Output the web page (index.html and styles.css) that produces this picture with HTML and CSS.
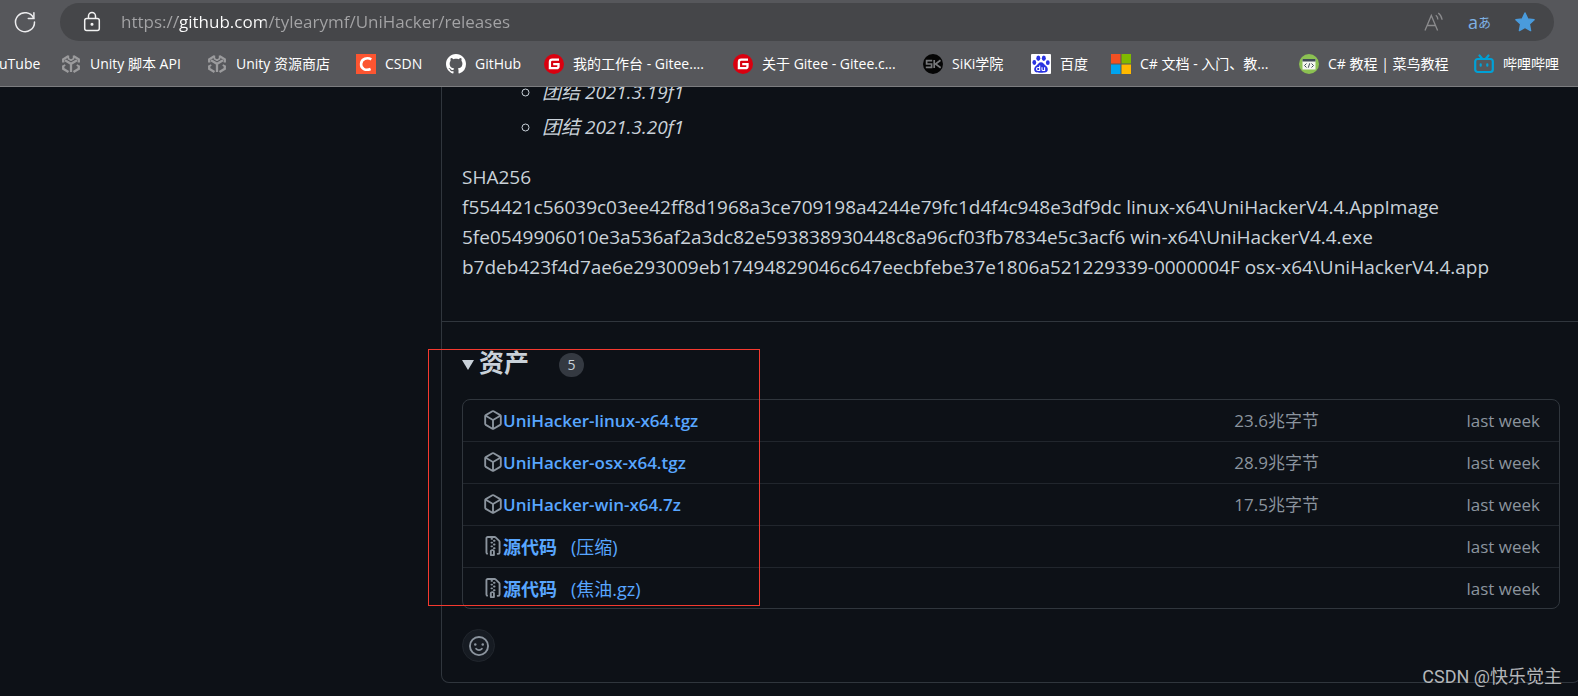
FILE: index.html
```html
<!DOCTYPE html>
<html lang="zh-CN">
<head>
<meta charset="utf-8">
<title>Releases · tylearymf/UniHacker</title>
<link rel="stylesheet" href="styles.css">
</head>
<body>
<svg class="defs" aria-hidden="true">
  <symbol id="i-unity" viewBox="0 0 20 20"><g fill="none" stroke="#9b9b9d" stroke-width="2.300"><path d="M2.200 8.500V5.300L7.200 2.200M12.800 2.200l5 3.100v3.200M2.200 11.800v3L7.500 18M17.800 11.800v3L12.500 18"/><path d="M4 6.300l6 3.500 6-3.500M10 9.800V18"/><path d="M7.400 1.500v3.300L10 6.300l2.600-1.500V1.500M1.500 12.500l2.800-1.500M18.500 12.500 15.700 11" stroke-width="1.600"/></g></symbol>
  <symbol id="i-gitee" viewBox="0 0 20 20"><circle cx="10" cy="10" r="10" fill="#d9000f"/><path d="M15 5.700H8.200a2.300 2.300 0 0 0-2.300 2.300v6.200h6.600a2 2 0 0 0 2-2v-2.100H9.200" fill="none" stroke="#fff" stroke-width="2.300"/></symbol>
  <symbol id="i-package" viewBox="0 0 16 16"><path fill="currentColor" d="m8.878.392 5.25 3.045c.54.314.872.89.872 1.514v6.098a1.75 1.75 0 0 1-.872 1.514l-5.25 3.045a1.75 1.75 0 0 1-1.756 0l-5.25-3.045A1.75 1.75 0 0 1 1 11.049V4.951c0-.624.332-1.201.872-1.514L7.122.392a1.75 1.75 0 0 1 1.756 0ZM7.875 1.69l-4.63 2.685L8 7.133l4.755-2.758-4.63-2.685a.248.248 0 0 0-.25 0ZM2.5 5.677v5.372c0 .09.047.171.125.216l4.625 2.683V8.432Zm6.25 8.271 4.625-2.683a.25.25 0 0 0 .125-.216V5.677L8.75 8.432Z"/></symbol>
  <symbol id="i-zip" viewBox="0 0 16 16"><path fill="currentColor" d="M3.500 1.750v11.500c0 .09.048.173.126.217a.75.75 0 0 1-.752 1.298A1.748 1.748 0 0 1 2 13.250V1.750C2 .784 2.784 0 3.750 0h5.586c.464 0 .909.185 1.237.513l2.914 2.914c.329.328.513.773.513 1.237v8.586A1.750 1.750 0 0 1 12.250 15h-.5a.75.75 0 0 1 0-1.500h.5a.25.25 0 0 0 .25-.25V4.664a.25.25 0 0 0-.073-.177L9.513 1.573a.25.25 0 0 0-.177-.073H7.250a.75.75 0 0 1 0 1.500h-.5a.75.75 0 0 1 0-1.500h-3a.25.25 0 0 0-.25.25Zm3.750 8.750h.5c.966 0 1.750.784 1.750 1.750v3a.75.75 0 0 1-.75.75h-2.500a.75.75 0 0 1-.75-.75v-3c0-.966.784-1.750 1.750-1.750ZM6 5.250a.75.75 0 0 1 .75-.75h.5a.75.75 0 0 1 0 1.500h-.5A.75.75 0 0 1 6 5.250Zm.75 2.250h.5a.75.75 0 0 1 0 1.500h-.5a.75.75 0 0 1 0-1.500ZM8 6.750A.75.75 0 0 1 8.750 6h.5a.75.75 0 0 1 0 1.500h-.5A.75.75 0 0 1 8 6.750ZM8.750 3h.5a.75.75 0 0 1 0 1.500h-.5a.75.75 0 0 1 0-1.500ZM8 9.750A.75.75 0 0 1 8.750 9h.5a.75.75 0 0 1 0 1.500h-.5A.75.75 0 0 1 8 9.750Zm-1 2.500v2.250h1v-2.250a.25.25 0 0 0-.25-.25h-.5a.25.25 0 0 0-.25.25Z"/></symbol>
</svg>

<header class="browser">
  <div class="toolbar">
    <button class="icon-btn reload" aria-label="刷新"><svg viewBox="0 0 24 24" width="24" height="24" fill="none" stroke="#ececee" stroke-width="1.500" stroke-linecap="round"><path d="M20.600 8.200A9.500 9.500 0 1 0 21.500 12"/><path d="M20.900 2.800v5.600h-5.600"/></svg></button>
    <div class="address">
      <button class="icon-btn" aria-label="查看站点信息"><svg viewBox="0 0 20 22" width="20" height="22" fill="none" stroke="#f2f2f2" stroke-width="1.500"><rect x="2.700" y="7.500" width="14.600" height="12" rx="2"/><path d="M6.500 7.500V5a3.500 3.500 0 0 1 7 0v2.500"/><circle cx="10" cy="13.300" r=".8" fill="#f2f2f2"/></svg></button>
      <input class="url" type="text" aria-label="地址栏" value="https://github.com/tylearymf/UniHacker/releases">
      <div class="actions">
        <button class="icon-btn" aria-label="大声朗读"><svg viewBox="0 0 20 20" width="20" height="20" fill="none" stroke="#8b8b8d" stroke-width="1.300"><path d="M1 18.500 7.300 3.500l6.300 15M3.200 13.500h8.200M11.800 3.300c1.300 1 2 2.500 2 4.200M14.300.900c2.200 1.800 3.500 4 3.800 6.800"/></svg></button>
        <button class="icon-btn translate" aria-label="翻译">a<span class="kana">あ</span></button>
        <button class="icon-btn" aria-label="收藏"><svg viewBox="0 0 20 20" width="20" height="20"><path fill="#4a9bdc" stroke="#4a9bdc" stroke-width="1.400" stroke-linejoin="round" d="m10 1 2.700 5.900 6.400.8-4.700 4.400 1.200 6.500L10 15.400l-5.600 3.200 1.200-6.500L.900 7.700l6.400-.8Z"/></svg></button>
      </div>
    </div>
  </div>
  <nav class="bookmarks" aria-label="收藏夹栏">
    <a href="#" class="bookmark">uTube</a>
    <a href="#" class="bookmark"><svg class="fav"><use href="#i-unity"/></svg><span>Unity 脚本 API</span></a>
    <a href="#" class="bookmark"><svg class="fav"><use href="#i-unity"/></svg><span>Unity 资源商店</span></a>
    <a href="#" class="bookmark"><svg class="fav" viewBox="0 0 20 20"><path fill="#fc5531" d="M0 0h20v20H0z"/><path d="M15.300 5.300c-4-2.300-9.800-.8-10.200 4.500-.3 5 4.500 7.300 9.500 5.200" fill="none" stroke="#fff" stroke-width="2.600"/></svg><span>CSDN</span></a>
    <a href="#" class="bookmark"><svg class="fav" viewBox="0 0 16 16"><path fill="#fff" d="M8 0C3.580 0 0 3.580 0 8c0 3.540 2.290 6.530 5.470 7.590.4.070.55-.17.55-.38 0-.19-.01-.82-.01-1.490-2.010.37-2.530-.49-2.690-.94-.09-.23-.48-.94-.82-1.130-.28-.15-.68-.52-.01-.53.63-.01 1.080.58 1.230.82.72 1.210 1.870.87 2.330.66.07-.52.28-.87.51-1.070-1.780-.2-3.640-.89-3.640-3.950 0-.87.31-1.590.82-2.150-.08-.2-.36-1.020.08-2.120 0 0 .67-.21 2.200.82.64-.18 1.320-.27 2-.27s1.360.09 2 .27c1.530-1.040 2.200-.82 2.200-.82.44 1.100.16 1.920.08 2.120.51.56.82 1.270.82 2.150 0 3.070-1.870 3.750-3.650 3.950.29.25.54.73.54 1.480 0 1.070-.01 1.930-.01 2.200 0 .21.15.46.55.38A8.010 8.010 0 0 0 16 8c0-4.420-3.580-8-8-8Z"/></svg><span>GitHub</span></a>
    <a href="#" class="bookmark"><svg class="fav"><use href="#i-gitee"/></svg><span>我的工作台 - Gitee....</span></a>
    <a href="#" class="bookmark"><svg class="fav"><use href="#i-gitee"/></svg><span>关于 Gitee - Gitee.c...</span></a>
    <a href="#" class="bookmark"><svg class="fav" viewBox="0 0 20 20"><circle cx="10" cy="10" r="10" fill="#050505"/><path d="M9.200 6.700H3.600V10h5v3.300H2.800M11.200 6v8M17.500 6.300 12.500 10l5.200 3.800" fill="none" stroke="#77787b" stroke-width="1.700"/></svg><span>SiKi学院</span></a>
    <a href="#" class="bookmark"><svg class="fav" viewBox="0 0 20 20"><rect width="20" height="20" rx="1" fill="#fff"/><g fill="#2932e1"><ellipse cx="7.300" cy="4.300" rx="2" ry="2.700"/><ellipse cx="12.800" cy="4.300" rx="2" ry="2.700"/><ellipse cx="3.300" cy="8.500" rx="1.900" ry="2.400"/><ellipse cx="16.800" cy="8.700" rx="1.900" ry="2.400"/><path d="M10 8.300c2.300 0 3 2 4.500 3.300 1.800 1.500 2.700 2.800 2.200 4.700-.6 2-2.200 2.400-6.700 2.400s-6.100-.4-6.700-2.400c-.5-1.900.4-3.200 2.200-4.700C7 10.300 7.700 8.300 10 8.300Z"/></g><path d="M8.700 11.500v5H7a1.300 1.300 0 0 1 0-3h1.700M11 13.200v2.300c0 .7.400 1 1 1h1.600v-3.300" fill="none" stroke="#fff" stroke-width="1.100"/></svg><span>百度</span></a>
    <a href="#" class="bookmark"><svg class="fav" viewBox="0 0 20 20"><path fill="#f25022" d="M0 0h9.500v9.500H0z"/><path fill="#7fba00" d="M10.500 0H20v9.500h-9.500z"/><path fill="#00a4ef" d="M0 10.500h9.500V20H0z"/><path fill="#ffb900" d="M10.500 10.500H20V20h-9.500z"/></svg><span>C# 文档 - 入门、教...</span></a>
    <a href="#" class="bookmark"><svg class="fav" viewBox="0 0 20 20"><circle cx="10" cy="10" r="10" fill="#8cc152"/><path fill="#f4f6f0" d="M3.500 5h13v10.500h-13z"/><path fill="#3f4b56" d="M3.500 5h13v2.500h-13z"/><path d="m7.500 9.500-2 2 2 2M12.500 9.500l2 2-2 2M10.700 9.300l-1.400 4.400" fill="none" stroke="#3f4b56"/></svg><span>C# 教程 | 菜鸟教程</span></a>
    <a href="#" class="bookmark"><svg class="fav" viewBox="0 0 20 20" fill="none" stroke="#00a1d6" stroke-width="2.200" stroke-linecap="round"><rect x="1.200" y="5" width="17.600" height="13" rx="2.500"/><path d="m5.500 1.500 2.500 3M14.500 1.500l-2.500 3M6.700 10.300v1.400M13.300 10.300v1.400"/></svg><span>哔哩哔哩</span></a>
  </nav>
</header>

<main class="page">
  <article class="release">
    <section class="notes">
      <ul class="outer"><li><ul class="versions">
        <li><em>团结 2021.3.19f1</em></li>
        <li><em>团结 2021.3.20f1</em></li>
      </ul></li></ul>
      <p class="hashes">SHA256<br>
      f554421c56039c03ee42ff8d1968a3ce709198a4244e79fc1d4f4c948e3df9dc linux-x64\UniHackerV4.4.AppImage<br>
      5fe0549906010e3a536af2a3dc82e593838930448c8a96cf03fb7834e5c3acf6 win-x64\UniHackerV4.4.exe<br>
      b7deb423f4d7ae6e293009eb17494829046c647eecbfebe37e1806a521229339-0000004F osx-x64\UniHackerV4.4.app</p>
    </section>
    <section class="assets">
      <h3 class="assets-title"><svg class="caret" viewBox="0 0 12 10"><path fill="currentColor" d="M0 0h12L6 10z"/></svg><span>资产</span><span class="count">5</span></h3>
      <ul class="files">
        <li class="file"><a href="#" class="name"><svg class="oct"><use href="#i-package"/></svg><b>UniHacker-linux-x64.tgz</b></a><span>23.6兆字节</span><time>last week</time></li>
        <li class="file"><a href="#" class="name"><svg class="oct"><use href="#i-package"/></svg><b>UniHacker-osx-x64.tgz</b></a><span>28.9兆字节</span><time>last week</time></li>
        <li class="file"><a href="#" class="name"><svg class="oct"><use href="#i-package"/></svg><b>UniHacker-win-x64.7z</b></a><span>17.5兆字节</span><time>last week</time></li>
        <li class="file"><a href="#" class="name"><svg class="oct"><use href="#i-zip"/></svg><b class="cjk">源代码</b><span class="format">(压缩)</span></a><span></span><time>last week</time></li>
        <li class="file"><a href="#" class="name"><svg class="oct"><use href="#i-zip"/></svg><b class="cjk">源代码</b><span class="format">(焦油.gz)</span></a><span></span><time>last week</time></li>
      </ul>
      <button class="react" aria-label="添加表情"><svg viewBox="0 0 16 16" width="20" height="20" fill="none" stroke="currentColor" stroke-width="1.500" stroke-linecap="round"><circle cx="8" cy="8" r="7.250"/><path d="M5.700 10.200c1.200 1.400 3.400 1.400 4.600 0"/><g fill="currentColor" stroke="none"><circle cx="5" cy="6.800" r="1"/><circle cx="11" cy="6.800" r="1"/></g></svg></button>
    </section>
  </article>
  <div class="marker"></div>
  <div class="watermark">CSDN @快乐觉主</div>
</main>
</body>
</html>
```
FILE: styles.css
```css
* { box-sizing: border-box; }

body {
  display: flex;
  flex-direction: column;
  min-height: 100vh;
  margin: 0;
  overflow: hidden;
  background: #0d1117;
  color: #c9d1d9;
  font-family: "Open Sans", "Noto Sans CJK SC", sans-serif;
  font-size: 19px;
  line-height: 30px;
}

a { color: inherit; text-decoration: none; }
ul { margin: 0; padding: 0; list-style: none; }
button { padding: 0; border: 0; background: none; font: inherit; }
.defs { display: none; }

/* Browser chrome */
.browser {
  background: #56575b;
  border-bottom: 1px solid #7c7d80;
}

.toolbar {
  display: flex;
  align-items: center;
  gap: 23px;
  padding: 3px 24px 3px 13px;
}

.icon-btn { display: flex; align-items: center; justify-content: center; }

.address {
  display: flex;
  flex: 1;
  align-items: center;
  gap: 19px;
  height: 38px;
  padding: 0 19px 0 22px;
  border-radius: 19px;
  background: #454649;
}

.url {
  flex: 1;
  min-width: 0;
  padding: 0;
  border: 0;
  outline: 0;
  font: inherit;
  font-size: 17px;
  color: transparent;
  background: linear-gradient(90deg, #a4a4a6 57px, #fff 57px 145px, #a4a4a6 145px);
  background-clip: text;
}

.actions { display: flex; align-items: center; gap: 24px; }
.translate { color: #7fb2e5; font-size: 18px; line-height: 20px; }
.kana { font-size: 13px; }

.bookmarks {
  display: grid;
  grid-template-columns: 44px 146px 149px 90px 98px 189px 190px 108px 80px 188px 175px 1fr;
  align-items: center;
  padding: 10px 0 12px 17px;
  color: #fff;
  font-size: 14px;
  line-height: 20px;
  white-space: nowrap;
}

.bookmark { display: flex; align-items: center; gap: 9px; }
.bookmark:first-child { margin-left: -18px; }
.fav { flex: none; width: 20px; height: 20px; }

/* Release card */
.page {
  position: relative;
  flex: 1;
  overflow: hidden;
  padding-left: 441px;
}

.release {
  margin-right: -3px;
  border: 1px solid #30363d;
  border-top: 0;
  border-radius: 0 0 8px 8px;
}

.notes { padding: 0 20px 39px; border-bottom: 1px solid #30363d; }
.outer { margin-top: -10px; padding-left: 40px; }
.versions { padding-left: 40px; list-style: circle; }
.versions li + li { margin-top: 5px; }
.hashes { margin: 20px 0 0; }

.assets { padding: 24px 20px 20px; }

.assets-title {
  display: flex;
  align-items: center;
  margin: 0 0 20px;
  font-size: 25px;
  line-height: 33px;
}

.caret { width: 12px; height: 10px; margin: 4px 5px 0 0; }

.count {
  min-width: 25px;
  margin: 4px 0 0 30px;
  border-radius: 12px;
  background: #343941;
  font-size: 14px;
  font-weight: 500;
  line-height: 24px;
  text-align: center;
}

.files { border: 1px solid #30363d; border-radius: 8px; font-size: 17px; }

.file {
  display: grid;
  grid-template-columns: 1fr auto 221px;
  padding: 6px 19px 5px 20px;
  color: #8b949e;
}

.file + .file { border-top: 1px solid #21262d; }
.file:last-child { padding-bottom: 4px; }
.file time { text-align: right; }
.name { display: flex; color: #58a6ff; }
.name b { font-weight: 600; }
.name .cjk { font-size: 18px; font-weight: 700; }
.oct { width: 20px; height: 20px; margin-top: 4px; color: #8b949e; }
.format { margin-left: 14px; font-size: 18px; }

.react {
  display: flex;
  align-items: center;
  justify-content: center;
  width: 33px;
  height: 33px;
  margin-top: 20px;
  border: 1px solid #21262d;
  border-radius: 50%;
  background: #161b22;
  color: #8b949e;
}

/* Annotations over the page */
.marker {
  position: absolute;
  top: 262px;
  left: 428px;
  width: 332px;
  height: 257px;
  border: 1px solid #f5392f;
}

.watermark {
  position: absolute;
  right: 16px;
  bottom: 4px;
  color: #b4b6b9;
  font-family: Roboto, "Noto Sans CJK SC", sans-serif;
  font-size: 18px;
}
```
